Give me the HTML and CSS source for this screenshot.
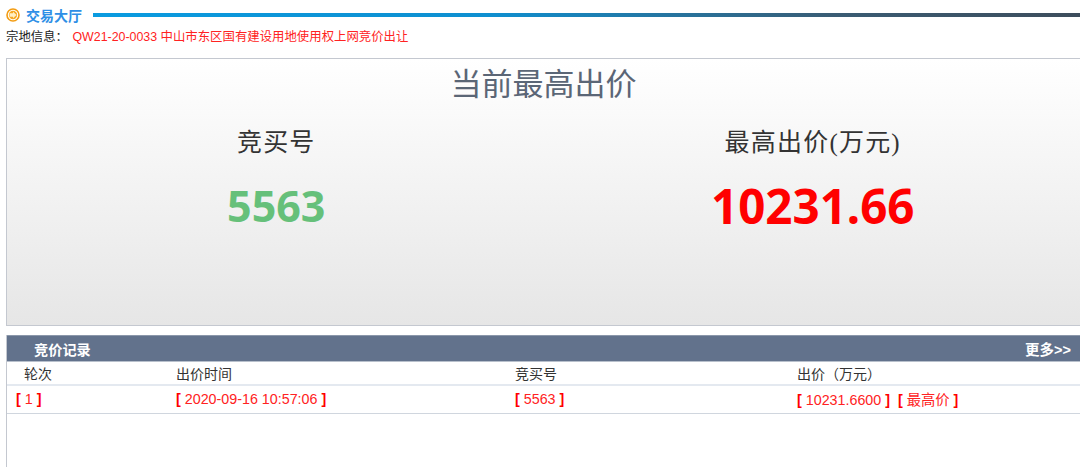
FILE: index.html
```html
<!DOCTYPE html>
<html lang="zh-CN">
<head>
  <meta charset="UTF-8">
  <title>交易大厅</title>
  <link rel="stylesheet" href="styles.css">
</head>
<body>

<!-- TITLE -->
<div class="hall-title">
  <svg class="hall-icon" width="14" height="14" viewBox="0 0 14 14">
    <circle cx="7" cy="7" r="6" fill="#fff" stroke="#f39c12" stroke-width="1.6"/>
    <circle cx="7" cy="7" r="4.2" fill="#f7a823"/>
    <path d="M3.6 5.2 H7 V3.8 L10.6 7 L7 10.2 V8.8 H3.6 Z" fill="#ffeec4"/>
  </svg>
  <span class="hall-name">交易大厅</span>
  <div class="hall-line"></div>
</div>
<div class="land-info">
  <span class="land-label">宗地信息：</span>
  <span class="land-name">QW21-20-0033 中山市东区国有建设用地使用权上网竞价出让</span>
</div>

<!-- TOP PRICE -->
<div class="price-panel">
  <div class="price-title">当前最高出价</div>
  <div class="price-cols">
    <div class="price-col col-left">
      <div class="col-head">竞买号</div>
      <div class="bid-no">5563</div>
    </div>
    <div class="price-col col-right">
      <div class="col-head">最高出价(万元)</div>
      <div class="bid-price">10231.66</div>
    </div>
  </div>
</div>

<!-- RECORDS -->
<div class="records">
  <div class="records-bar">
    <span class="records-title">竞价记录</span>
    <span class="records-more">更多&gt;&gt;</span>
  </div>
  <div class="rec-row rec-head">
    <div class="cell c1 head-first">轮次</div>
    <div class="cell c2">出价时间</div>
    <div class="cell c3">竞买号</div>
    <div class="cell c4">出价（万元）</div>
  </div>
  <div class="rec-row rec-data">
    <div class="cell c1"><b>[</b> 1 <b>]</b></div>
    <div class="cell c2"><b>[</b> 2020-09-16 10:57:06 <b>]</b></div>
    <div class="cell c3"><b>[</b> 5563 <b>]</b></div>
    <div class="cell c4"><b>[</b> 10231.6600 <b>]</b>&nbsp; <b>[</b> 最高价 <b>]</b></div>
  </div>
</div>

</body>
</html>
```

FILE: styles.css
```css
html, body {
  margin: 0;
  height: 467px;
  overflow: hidden;
}

body {
  background: #fff;
  font-family: "Liberation Sans", Arial, "Noto Sans CJK SC", sans-serif;
  font-size: 13px;
  color: #222;
}

.hall-title {
  display: flex;
  align-items: center;
  height: 27px;
  padding-left: 6px;
  padding-top: 5px;
  padding-bottom: 2px;
  box-sizing: border-box;
}

.hall-icon {
  flex: none;
}

.hall-name {
  margin-left: 6px;
  color: #2f8fe6;
  font-size: 14px;
  font-weight: bold;
}

.hall-line {
  flex: 1;
  height: 4px;
  margin-left: 11px;
  margin-top: -1px;
  background: linear-gradient(to right, #0a9be0 0%, #0e8fd0 40%, #3a5c74 75%, #3d4d5c 100%);
}

.land-info {
  height: 31px;
  padding-left: 6px;
  line-height: 20px;
  font-size: 12.4px;
}

.land-name {
  margin-left: 1px;
  color: #f22;
}

.price-panel {
  height: 266px;
  margin-left: 6px;
  border: 1px solid #c4c8d0;
  border-right: none;
  background: linear-gradient(to bottom, #fff 0%, #e6e6e6 100%);
}

.price-title {
  height: 52px;
  line-height: 52px;
  text-align: center;
  font-size: 31px;
  color: #5b6676;
}

.price-cols {
  display: flex;
}

.price-col {
  text-align: center;
}

.col-left {
  width: 539px;
}

.col-right {
  width: 535px;
}

.col-head {
  margin-top: 14px;
  height: 36px;
  line-height: 36px;
  font-family: "Liberation Serif", "Noto Sans CJK SC", serif;
  font-size: 25px;
  letter-spacing: 1.2px;
  color: #333;
}

.bid-no, .bid-price {
  margin-top: 17px;
  height: 56px;
  line-height: 56px;
  font-family: "Noto Sans", "Open Sans", sans-serif;
  font-size: 43px;
  font-weight: bold;
}

.bid-no {
  color: #66c07a;
}

.bid-price {
  color: #f00;
  font-size: 47.5px;
}

.records {
  height: 132px;
  margin-top: 9px;
  margin-left: 6px;
  border-left: 1px solid #c4c8d0;
}

.records-bar {
  display: flex;
  justify-content: space-between;
  align-items: center;
  height: 27px;
  padding: 0 9px 0 27px;
  box-sizing: border-box;
  background: #62728c;
  border-top: 1px solid #8b97aa;
  border-bottom: 1px solid #b8c0cc;
  color: #fff;
  font-size: 14.2px;
  font-weight: bold;
}

.records-more {
  font-size: 14.5px;
}

.rec-row {
  display: flex;
  align-items: center;
  box-sizing: border-box;
  font-size: 14px;
}

.rec-head {
  height: 24px;
  border-bottom: 2px solid #e4e9f0;
  color: #333;
}

.rec-data {
  height: 28px;
  padding-bottom: 2px;
  border-bottom: 1px solid #d0d6de;
  font-size: 14.3px;
  color: #f22;
}

.rec-data b {
  color: #f00;
}

.cell {
  flex: none;
  box-sizing: border-box;
}

.c1 {
  width: 169px;
  padding-left: 9px;
}

.head-first {
  padding-left: 17px;
}

.c2 {
  width: 339px;
}

.c3 {
  width: 282px;
}

.c4 {
  flex: 1;
}
```
